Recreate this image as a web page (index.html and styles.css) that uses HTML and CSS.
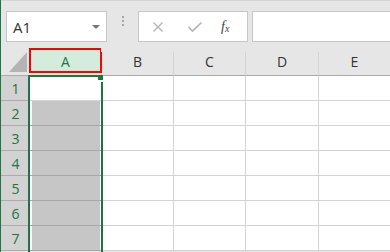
FILE: index.html
```html
<!DOCTYPE html>
<html lang="ja">
<head>
    <meta charset="UTF-8">
    <meta name="viewport" content="width=device-width, initial-scale=1.0">
    <title>Excel</title>
    <link rel="stylesheet" href="styles.css">
</head>
<body>
    <div class="app">
        <!-- barre de formule -->
        <div class="toolbar">
            <div class="namebox">
                <span>A1</span>
                <span class="caret"></span>
            </div>
            <div class="dots"><i></i><i></i><i></i></div>
            <div class="fxbox">
                <svg class="btn-cancel" width="12" height="12" viewBox="0 0 12 12">
                    <path d="M1.5 1.5 L10.5 10.5 M10.5 1.5 L1.5 10.5" stroke="#b4b4b4" stroke-width="1.3" fill="none"/>
                </svg>
                <svg class="btn-enter" width="16" height="12" viewBox="0 0 16 12">
                    <path d="M1.5 6 L5.5 10 L14.5 1.5" stroke="#b4b4b4" stroke-width="1.7" fill="none"/>
                </svg>
                <span class="fx">f<sub>x</sub></span>
            </div>
            <div class="formula"></div>
        </div>

        <!-- feuille -->
        <div class="sheet">
            <div class="grid">
                <div class="corner">
                    <svg width="18" height="20" viewBox="0 0 18 20"><polygon points="18,0 18,20 0,20" fill="#b4b4b4"/></svg>
                </div>
                <div class="colhead active">A<span class="mark"></span></div>
                <div class="colhead">B</div>
                <div class="colhead">C</div>
                <div class="colhead">D</div>
                <div class="colhead">E</div>

                <div class="rowhead">1</div>
                <div class="cell"></div><div class="cell"></div><div class="cell"></div><div class="cell"></div><div class="cell"></div>
                <div class="rowhead">2</div>
                <div class="cell sel"></div><div class="cell"></div><div class="cell"></div><div class="cell"></div><div class="cell"></div>
                <div class="rowhead">3</div>
                <div class="cell sel"></div><div class="cell"></div><div class="cell"></div><div class="cell"></div><div class="cell"></div>
                <div class="rowhead">4</div>
                <div class="cell sel"></div><div class="cell"></div><div class="cell"></div><div class="cell"></div><div class="cell"></div>
                <div class="rowhead">5</div>
                <div class="cell sel"></div><div class="cell"></div><div class="cell"></div><div class="cell"></div><div class="cell"></div>
                <div class="rowhead">6</div>
                <div class="cell sel"></div><div class="cell"></div><div class="cell"></div><div class="cell"></div><div class="cell"></div>
                <div class="rowhead">7</div>
                <div class="cell sel"></div><div class="cell"></div><div class="cell"></div><div class="cell"></div><div class="cell"></div>
            </div>
            <div class="selection"></div>
            <div class="handle"></div>
        </div>
    </div>
</body>
</html>
```

FILE: styles.css
```css
body {
    margin: 0;
    font-family: "Open Sans", "Noto Sans", Arial, sans-serif;
    background-color: #e6e6e6;
    overflow: hidden;
}

.app {
    height: 252px;
    border-left: 1px solid #217346;
    box-sizing: border-box;
    overflow: hidden;
}

.toolbar {
    height: 46px;
    box-sizing: border-box;
    border-top: 1px solid #d4d4d4;
    padding: 10px 0 0 5px;
    display: flex;
    align-items: flex-start;
}

.namebox {
    width: 101px;
    height: 31px;
    box-sizing: border-box;
    border: 1px solid #c6c6c6;
    background-color: #fff;
    display: flex;
    align-items: center;
    justify-content: space-between;
    padding: 0 6px 0 6px;
    font-size: 15px;
    color: #333;
}

.caret {
    width: 0;
    height: 0;
    border-left: 4px solid transparent;
    border-right: 4px solid transparent;
    border-top: 4px solid #777;
}

.dots {
    width: 31px;
    display: flex;
    flex-direction: column;
    align-items: center;
    gap: 2px;
    padding-top: 5px;
}

.dots i {
    display: block;
    width: 2px;
    height: 2px;
    background-color: #a6a6a6;
}

.fxbox {
    width: 110px;
    height: 31px;
    box-sizing: border-box;
    border: 1px solid #c6c6c6;
    background-color: #fff;
    display: flex;
    align-items: center;
    padding-left: 13px;
}

.btn-enter {
    margin-left: 23px;
}

.fx {
    font-family: "Liberation Serif", serif;
    font-style: italic;
    font-size: 14px;
    color: #444;
    margin-left: 18px;
}

.fx sub {
    font-size: 10px;
    vertical-align: -1px;
}

.formula {
    flex: 1;
    height: 31px;
    box-sizing: border-box;
    margin-left: 4px;
    border: 1px solid #c6c6c6;
    border-right: none;
    background-color: #fff;
}

.sheet {
    position: relative;
    height: 206px;
    overflow: hidden;
}

.grid {
    display: grid;
    grid-template-columns: 29px 72px 72px 72px 73px 72px;
    grid-template-rows: 30px repeat(7, 25px);
    background-color: #fff;
}

.corner {
    background-color: #e6e6e6;
    border-bottom: 1px solid #ababab;
    display: flex;
    align-items: flex-end;
    justify-content: flex-end;
    padding: 0 3px 3px 0;
}

.colhead {
    position: relative;
    background-color: #e6e6e6;
    border-bottom: 1px solid #ababab;
    border-right: 1px solid #d4d4d4;
    display: flex;
    align-items: center;
    justify-content: center;
    font-size: 14px;
    color: #333;
    padding-top: 2px;
    box-sizing: border-box;
}

.colhead::after {
    content: "";
    position: absolute;
    right: -1px;
    top: 0;
    height: 6px;
    width: 1px;
    background-color: #e6e6e6;
}

.colhead.active {
    background-color: #d3ecdc;
    color: #217346;
}

.mark {
    position: absolute;
    left: -1px;
    right: -1px;
    top: 2px;
    bottom: 2px;
    border: 2px solid #ff0000;
}

.rowhead {
    background-color: #d2d2d2;
    border-bottom: 1px solid #ababab;
    display: flex;
    align-items: center;
    justify-content: center;
    font-size: 14px;
    color: #217346;
}

.cell {
    border-right: 1px solid #d4d4d4;
    border-bottom: 1px solid #d4d4d4;
}

.cell.sel {
    background-color: #c6c6c6;
    border-bottom-color: #a8a8a8;
    box-shadow: inset 2px 0 #fff, inset -1px 0 #fff;
}

.selection {
    position: absolute;
    left: 27px;
    top: 29px;
    width: 71px;
    height: 200px;
    border: 2px solid #217346;
}

.handle {
    position: absolute;
    left: 97px;
    top: 29px;
    width: 5px;
    height: 5px;
    background-color: #217346;
    border-bottom: 2px solid #fff;
}
```
